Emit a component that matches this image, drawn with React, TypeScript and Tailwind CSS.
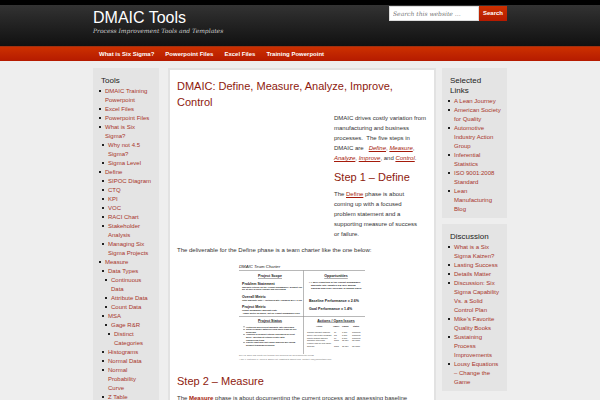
import React from "react";

type Item = { label: string; children?: Item[] };

const tools: Item[] = [
  { label: "DMAIC Training Powerpoint" },
  { label: "Excel Files" },
  { label: "Powerpoint Files" },
  {
    label: "What is Six Sigma?",
    children: [{ label: "Why not 4.5 Sigma?" }, { label: "Sigma Level" }],
  },
  {
    label: "Define",
    children: [
      { label: "SIPOC Diagram" },
      { label: "CTQ" },
      { label: "KPI" },
      { label: "VOC" },
      { label: "RACI Chart" },
      { label: "Stakeholder Analysis" },
      { label: "Managing Six Sigma Projects" },
    ],
  },
  {
    label: "Measure",
    children: [
      {
        label: "Data Types",
        children: [
          { label: "Continuous Data" },
          { label: "Attribute Data" },
          { label: "Count Data" },
        ],
      },
      {
        label: "MSA",
        children: [{ label: "Gage R&R", children: [{ label: "Distinct Categories" }] }],
      },
      { label: "Histograms" },
      { label: "Normal Data" },
      { label: "Normal Probability Curve" },
      { label: "Z Table" },
    ],
  },
];

const selected: Item[] = [
  { label: "A Lean Journey" },
  { label: "American Society for Quality" },
  { label: "Automotive Industry Action Group" },
  { label: "Inferential Statistics" },
  { label: "ISO 9001:2008 Standard" },
  { label: "Lean Manufacturing Blog" },
];

const discussion: Item[] = [
  { label: "What is a Six Sigma Kaizen?" },
  { label: "Lasting Success" },
  { label: "Details Matter" },
  { label: "Discussion: Six Sigma Capability Vs. a Solid Control Plan" },
  { label: "Mike’s Favorite Quality Books" },
  { label: "Sustaining Process Improvements" },
  { label: "Lousy Equations – Change the Game" },
];

function LinkList({ items, nested = false }: { items: Item[]; nested?: boolean }) {
  return (
    <ul className={nested ? "pl-[3px]" : ""}>
      {items.map((item) => (
        <li key={item.label}>
          <div className="flex">
            <span className="mt-[3px] mr-1 size-[2px] shrink-0 bg-[#222]" />
            <a href="#" className="text-[#a8352a]">
              {item.label}
            </a>
          </div>
          {item.children && <LinkList items={item.children} nested />}
        </li>
      ))}
    </ul>
  );
}

function Widget({ title, items }: { title: string; items: Item[] }) {
  return (
    <section className="bg-[#e4e4e4] pt-2 pr-[6px] pb-1 pl-[6px] text-[6px] leading-[9px]">
      <h4 className="pr-2 pb-px pl-[2px] text-[8px] leading-[10px] text-[#222]">{title}</h4>
      <LinkList items={items} />
    </section>
  );
}

function Charter() {
  const rows = [
    ["Confirm warranty baseline", "JK", "1-Nov", "Complete"],
    ["Survey call center feedback", "RS", "3-Nov", "Complete"],
    ["Pareto product families", "TL", "8-Nov", "Complete"],
    ["Schedule interviews", "Team", "12-Nov", "On Track"],
    ["Finalize plan for root cause", "", "", ""],
    ["analysis", "Team", "15-Nov", "On Track"],
  ];
  const status = [
    "Historical and current warranty rate confirmed",
    "Initial feedback gathered from sales team on key",
    "problems",
    "Analysis of product returns scheduled for next",
    "week - meeting at returns center with",
    "engineering team",
    "Pareto chart and root cause analysis will follow",
    "product teardown sessions",
  ];
  return (
    <svg viewBox="-3 0 134 100" className="mx-auto block w-[134px]" fontFamily="Liberation Sans, Arial, sans-serif" fill="#222" role="img" aria-label="DMAIC Team Charter">
      <text x="1" y="7" fontSize="4.3" fontStyle="italic">DMAIC Team Charter</text>
      <path d="M1 9.5H127M1 55.5H127M65.5 9.5V93" stroke="#888" strokeWidth=".6" fill="none" />
      <g fontWeight="bold" fontSize="3.6">
        <g textAnchor="middle" textDecoration="underline">
          <text x="32" y="16">Project Scope</text>
          <text x="98" y="16">Opportunities</text>
          <text x="32" y="60.5">Project Status</text>
          <text x="98" y="60.5">Actions / Open Issues</text>
        </g>
        <text x="4" y="23.5">Problem Statement</text>
        <text x="4" y="36.5">Overall Metric</text>
        <text x="4" y="47">Project Metric</text>
        <text x="71" y="41">Baseline Performance = 2.6%</text>
        <text x="71" y="49">Goal Performance = 1.4%</text>
      </g>
      <g fontSize="2.2" fontWeight="bold">
        <text x="4" y="26.5">Warranty returns on the &quot;Cobalt Snowmaker&quot; product line</text>
        <text x="4" y="29">are at 26% of sales volume and increasing</text>
        <text x="4" y="39.5">Total Warranty Rate = (Returned Qty / Shipped QTY) x 100</text>
        <text x="4" y="50">Cobalt Snowmaker Warranty Rate</text>
        <text x="4" y="52.5">- Same metric as above, but for Cobalt Snowmaker only</text>
        <text x="71" y="22" fontSize="2.5">• A 50% reduction in the Cobalt Snowmaker</text>
        <text x="73" y="25" fontSize="2.5">warranty rate equates a $437K annual</text>
        <text x="73" y="28" fontSize="2.5">savings and a 2% increase in annual sales</text>
        {status.map((line, i) => (
          <text key={line} x="8" y={66.5 + i * 2.6}>{line}</text>
        ))}
        {[0, 1, 3, 6].map((i) => (
          <circle key={i} cx="6" cy={65.8 + i * 2.6} r=".5" />
        ))}
      </g>
      <g fontSize="2">
        <g fontWeight="bold">
          <text x="78" y="66">Action</text>
          <text x="95" y="66">Owner</text>
          <text x="104" y="66">Timing</text>
          <text x="115" y="66">Status</text>
        </g>
        {rows.map((r, i) => (
          <g key={r[0]}>
            <text x="69" y={72 + i * 2.8}>{r[0]}</text>
            <text x="96" y={72 + i * 2.8}>{r[1]}</text>
            <text x="104" y={72 + i * 2.8}>{r[2]}</text>
            <text x="114" y={72 + i * 2.8}>{r[3]}</text>
          </g>
        ))}
      </g>
      <g fontSize="2.2" fontStyle="italic" fill="#777">
        <text x="1" y="95">DMAIC Tools and charts can tailored your business for Developmental Needs</text>
        <text x="1" y="98.5">* Jan 4: Materials in, Week 3: Owner list, updated to project files, contact: info@dmaictools.com</text>
      </g>
    </svg>
  );
}

function TextLink({ children }: { children: React.ReactNode }) {
  return (
    <a href="#" className="text-[#a51b0b] underline">
      {children}
    </a>
  );
}

const headingClass = "text-[11px] leading-4 text-[#8e1a0e]";
const serif = "font-['DejaVu_Serif',serif] italic";

export default function App() {
  return (
    <div className="h-screen overflow-hidden bg-[#eee] font-['Liberation_Sans',Arial,sans-serif] text-[6px] text-[#333]">
      <header className="border-t-[5px] border-black bg-linear-to-b from-[#333] to-[#111]">
        <div className="mx-auto flex h-[41px] w-[69%] items-start justify-between">
          <div className="pt-1">
            <h1 className="text-[16px] leading-[18px] text-white">
              <a href="#">DMAIC Tools</a>
            </h1>
            <p className={`text-[6px] leading-2 text-[#ccc] ${serif}`}>
              Process Improvement Tools and Templates
            </p>
          </div>
          <form className="mt-px flex h-[15px]" onSubmit={(e) => e.preventDefault()}>
            <input
              type="text"
              aria-label="Search this website"
              placeholder="Search this website …"
              className={`w-[90px] border border-[#ddd] bg-white px-[3px] text-[6px] placeholder:text-[#777] ${serif}`}
            />
            <button type="submit" className="w-7 bg-linear-to-b from-[#cc3000] to-[#b51a00] text-[6px] font-bold text-white">
              Search
            </button>
          </form>
        </div>
      </header>

      <nav className="border-t border-[#a03010] bg-linear-to-b from-[#cc3000] to-[#b51a00]">
        <div className="mx-auto flex h-[14px] w-[69%] items-center gap-[11px] px-[6px] text-[6px] font-bold text-white">
          <a href="#">What is Six Sigma?</a>
          <a href="#">Powerpoint Files</a>
          <a href="#">Excel Files</a>
          <a href="#">Training Powerpoint</a>
        </div>
      </nav>

      <div className="mx-auto flex w-[69%] items-start pt-[7px]">
        <aside className="mr-[9px] w-[66px] shrink-0">
          <Widget title="Tools" items={tools} />
        </aside>

        <main className="min-w-0 flex-1 border-2 border-[#e2e2e2] bg-white px-[7px] pt-2 leading-[10px]">
          <h2 className={headingClass}>DMAIC: Define, Measure, Analyze, Improve, Control</h2>
          <div className="mt-[3px] flex justify-end">
            <div className="w-[93px]">
              <p>
                DMAIC drives costly variation from manufacturing and business processes.&nbsp; The
                five steps in DMAIC are &nbsp; <em><TextLink>Define</TextLink></em>,{" "}
                <em><TextLink>Measure</TextLink></em>, <em><TextLink>Analyze</TextLink></em>,{" "}
                <em><TextLink>Improve</TextLink></em>, and <em><TextLink>Control</TextLink></em>.
              </p>
              <h3 className={`mt-[6px] mb-1 ${headingClass}`}>Step 1 – Define</h3>
              <p className="pr-[6px]">
                The <TextLink>Define</TextLink> phase is about coming up with a focused problem
                statement and a supporting measure of success or failure.
              </p>
            </div>
          </div>
          <p className="my-[6px]">
            The deliverable for the Define phase is a team charter like the one below:
          </p>
          <Charter />
          <h3 className={`mt-3 mb-1 ${headingClass}`}>Step 2 – Measure</h3>
          <p>
            The <a href="#" className="font-bold text-[#a51b0b]">Measure</a> phase is about
            documenting the current process and assessing baseline performance.
          </p>
        </main>

        <aside className="ml-[6px] flex w-[65px] shrink-0 flex-col gap-[6px]">
          <Widget title="Selected Links" items={selected} />
          <Widget title="Discussion" items={discussion} />
        </aside>
      </div>
    </div>
  );
}
